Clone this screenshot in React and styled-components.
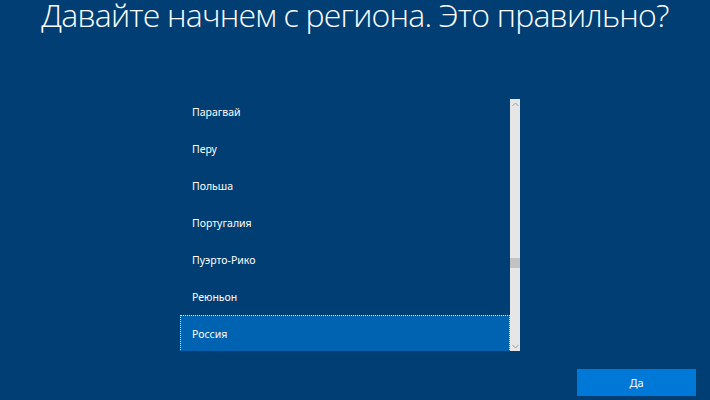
import React from "react";
import styled, { createGlobalStyle } from "styled-components";

const Global = createGlobalStyle`
  html, body { margin: 0; padding: 0; background: #003e73; }
  body { width: 710px; height: 400px; overflow: hidden; }
`;

const Page = styled.div`
  width: 710px;
  height: 400px;
  background: #003e73;
  display: flex;
  flex-direction: column;
  overflow: hidden;
  font-family: "Open Sans", "Noto Sans", sans-serif;
  color: #ffffff;
`;

const Title = styled.h1`
  margin: 0;
  height: 40px;
  margin-top: -8px;
  font-family: "Open Sans", "Noto Sans", sans-serif;
  font-weight: 300;
  font-size: 32px;
  line-height: 46px;
  text-align: center;
  letter-spacing: -0.8px;
  color: #ffffff;
  white-space: nowrap;
`;

const ListArea = styled.div`
  margin-top: 67px;
  margin-left: 180px;
  width: 340px;
  height: 252px;
  display: flex;
`;

const ListViewport = styled.div`
  flex: 1;
  overflow: hidden;
  position: relative;
`;

const ListInner = styled.ul`
  list-style: none;
  margin: -6px 0 0 0;
  padding: 0;
`;

const Row = styled.li`
  height: 37px;
  box-sizing: border-box;
  display: flex;
  align-items: center;
  padding-left: 11px;
  font-family: "Noto Sans", "Open Sans", sans-serif;
  font-size: 10.5px;
  color: #ffffff;
  background: ${(p) => (p.$selected ? "#0063b1" : "transparent")};
  border: 1px dotted ${(p) => (p.$selected ? "#d8e6f5" : "transparent")};
`;

const Scrollbar = styled.div`
  width: 10px;
  background: #e6e6e6;
  display: flex;
  flex-direction: column;
  align-items: center;
  position: relative;
`;

const Arrow = styled.div`
  height: 10px;
  width: 10px;
  display: flex;
  align-items: center;
  justify-content: center;
`;

const Track = styled.div`
  flex: 1;
  width: 100%;
  position: relative;
`;

const Thumb = styled.div`
  position: absolute;
  left: 0;
  right: 0;
  top: 149px;
  height: 10px;
  background: #c2c2c2;
`;

const Footer = styled.div`
  margin-top: auto;
  display: flex;
  justify-content: flex-end;
  padding: 0 14px 4px 0;
`;

const Button = styled.button`
  width: 119px;
  height: 27px;
  border: none;
  background: #0078d7;
  color: #ffffff;
  font-family: "Noto Sans", "Open Sans", sans-serif;
  font-size: 11px;
  padding: 0;
`;

const Chevron = ({ up }) => (
  <svg width="7" height="5" viewBox="0 0 7 5">
    <path
      d={up ? "M0.5 4 L3.5 1 L6.5 4" : "M0.5 1 L3.5 4 L6.5 1"}
      fill="none"
      stroke="#9a9a9a"
      strokeWidth="1"
    />
  </svg>
);

const items = [
  "Парагвай",
  "Перу",
  "Польша",
  "Португалия",
  "Пуэрто-Рико",
  "Реюньон",
  "Россия",
];

export default function App() {
  return (
    <>
      <Global />
      <Page>
        <Title>Давайте начнем с региона. Это правильно?</Title>
        <ListArea>
          <ListViewport>
            <ListInner>
              {items.map((t) => (
                <Row key={t} $selected={t === "Россия"}>
                  {t}
                </Row>
              ))}
            </ListInner>
          </ListViewport>
          <Scrollbar>
            <Arrow>
              <Chevron up />
            </Arrow>
            <Track>
              <Thumb />
            </Track>
            <Arrow>
              <Chevron />
            </Arrow>
          </Scrollbar>
        </ListArea>
        <Footer>
          <Button>Да</Button>
        </Footer>
      </Page>
    </>
  );
}
